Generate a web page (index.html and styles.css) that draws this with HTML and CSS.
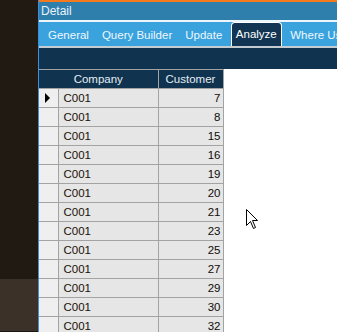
FILE: index.html
```html
<!DOCTYPE html>
<html>
<head>
<meta charset="utf-8">
<link rel="stylesheet" href="styles.css">
</head>
<body>
<div class="screen">
  <div class="desk">
    <div class="desk-top"></div>
    <div class="desk-low"></div>
    <div class="desk-end"></div>
  </div>
  <div class="window">
    <div class="accent"></div>
    <div class="titlebar">Detail</div>
    <div class="sep"></div>
    <div class="tabs">
      <span class="tab">General</span>
      <span class="tab">Query Builder</span>
      <span class="tab">Update</span>
      <span class="tab active">Analyze</span>
      <span class="tab">Where Used</span>
    </div>
    <div class="band"></div>
    <div class="gridwrap">
      <table class="grid">
        <colgroup>
          <col class="c-ind">
          <col class="c-co">
          <col class="c-num">
        </colgroup>
        <thead>
          <tr><th colspan="2" class="h-company">Company</th><th class="h-cust">Customer</th></tr>
        </thead>
        <tbody>
          <tr><td class="ind"><span class="arrow"></span></td><td class="co">C001</td><td class="num">7</td></tr>
          <tr><td class="ind"></td><td class="co">C001</td><td class="num">8</td></tr>
          <tr><td class="ind"></td><td class="co">C001</td><td class="num">15</td></tr>
          <tr><td class="ind"></td><td class="co">C001</td><td class="num">16</td></tr>
          <tr><td class="ind"></td><td class="co">C001</td><td class="num">19</td></tr>
          <tr><td class="ind"></td><td class="co">C001</td><td class="num">20</td></tr>
          <tr><td class="ind"></td><td class="co">C001</td><td class="num">21</td></tr>
          <tr><td class="ind"></td><td class="co">C001</td><td class="num">23</td></tr>
          <tr><td class="ind"></td><td class="co">C001</td><td class="num">25</td></tr>
          <tr><td class="ind"></td><td class="co">C001</td><td class="num">27</td></tr>
          <tr><td class="ind"></td><td class="co">C001</td><td class="num">29</td></tr>
          <tr><td class="ind"></td><td class="co">C001</td><td class="num">30</td></tr>
          <tr><td class="ind"></td><td class="co">C001</td><td class="num">32</td></tr>
        </tbody>
      </table>
    </div>
  </div>
  <svg class="cursor" width="13" height="20" viewBox="0 0 13 20">
    <path d="M0.5 0.5 L0.5 16.5 L4.5 12.5 L7.5 19.5 L9.5 18.5 L6.5 11.5 L11.5 11.5 Z" fill="#ffffff" stroke="#000000" stroke-width="1"/>
  </svg>
</div>
</body>
</html>
```
FILE: styles.css
```css
html, body {
  margin: 0;
  padding: 0;
}
body {
  width: 337px;
  height: 332px;
  overflow: hidden;
  font-family: "Liberation Sans", Arial, sans-serif;
  font-size: 11.5px;
}
.screen {
  position: relative;
  display: flex;
  width: 337px;
  height: 332px;
  overflow: hidden;
}
.desk {
  width: 38px;
  flex: none;
  display: flex;
  flex-direction: column;
}
.desk-top {
  height: 279px;
  flex: none;
  background: #211a12;
}
.desk-low {
  height: 52px;
  flex: none;
  background: #3b3128;
}
.desk-end {
  flex: 1;
  background: #1c1712;
}
.window {
  flex: 1;
  display: flex;
  flex-direction: column;
  border-left: 1px solid #3d8ede;
  background: #ffffff;
  min-width: 0;
  overflow: hidden;
}
.accent {
  flex: none;
  height: 2px;
  background: #f57a1e;
}
.titlebar {
  flex: none;
  height: 18px;
  line-height: 18px;
  background: #2f7fad;
  color: #e8f3fb;
  padding-left: 2px;
  font-size: 12px;
}
.sep {
  flex: none;
  height: 2px;
  background: #eef6fb;
}
.tabs {
  flex: none;
  height: 24px;
  background: #3aa3dd;
  border-bottom: 2px solid #c4ccd2;
  display: flex;
  align-items: stretch;
  padding-left: 2.5px;
  white-space: nowrap;
  overflow: hidden;
}
.tab {
  padding: 0 6.5px;
  color: #eef7fd;
  line-height: 27px;
}
.tab.active {
  margin: 0 2px 0 2px;
  padding: 0 4px;
  background: #113552;
  border: 1.5px solid #ffffff;
  border-bottom: none;
  border-radius: 4px 4px 0 0;
  line-height: 22px;
  color: #ffffff;
}
.band {
  flex: none;
  height: 21px;
  background: #10344f;
}
.gridwrap {
  flex: 1;
  min-height: 0;
  overflow: hidden;
  background: #ffffff;
}
.grid {
  border-collapse: collapse;
  table-layout: fixed;
  width: 184px;
}
.c-ind { width: 19px; }
.c-co { width: 100px; }
.c-num { width: 65px; }
.grid th, .grid td {
  border: 1px solid #a3a3a3;
  padding: 0;
  height: 18px;
  white-space: nowrap;
  overflow: hidden;
}
.grid th:first-child, .grid td:first-child {
  border-left: none;
}
.grid th {
  background: #10344f;
  color: #e4edf4;
  font-weight: normal;
  text-align: center;
}
.ind {
  background: #efefef;
}
.co {
  background: #e6e6e6;
  color: #1a1208;
  padding-left: 5px !important;
}
.num {
  background: #e6e6e6;
  color: #100c08;
  text-align: right;
  padding-right: 2px !important;
}
.arrow {
  display: block;
  width: 0;
  height: 0;
  margin-left: 6px;
  border-top: 5px solid transparent;
  border-bottom: 5px solid transparent;
  border-left: 5px solid #000000;
}
.cursor {
  position: absolute;
  left: 246px;
  top: 209px;
}
```
